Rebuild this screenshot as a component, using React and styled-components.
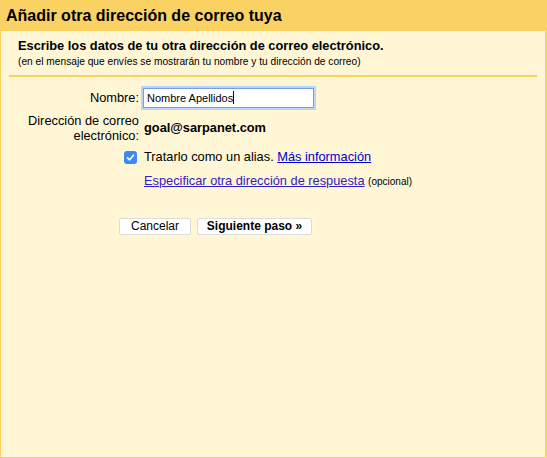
import React from "react";
import styled, { createGlobalStyle } from "styled-components";

const Global = createGlobalStyle`
  html, body { margin: 0; padding: 0; }
  body { font-family: "Liberation Sans", Arial, sans-serif; color: #000; }
`;

const Page = styled.div`
  width: 547px;
  height: 458px;
  background: #fad163;
  display: flex;
  flex-direction: column;
  box-sizing: border-box;
`;

const Header = styled.h1`
  margin: 0;
  height: 31px;
  padding-left: 6px;
  display: flex;
  align-items: center;
  font-size: 16px;
  font-weight: bold;
  letter-spacing: 0;
`;

const Body = styled.div`
  flex: 1;
  margin: 0 2px 1px 1px;
  background: #fff6d6;
  display: flex;
  flex-direction: column;
`;

const Intro = styled.div`
  padding: 7px 17px 0;
`;

const Lead = styled.div`
  font-size: 12.8px;
  font-weight: bold;
  line-height: 15px;
`;

const Note = styled.div`
  font-size: 10.2px;
  line-height: 13px;
  margin-top: 2px;
`;

const Rule = styled.div`
  height: 2px;
  background: #fad163;
  margin: 7px 8px 0;
`;

const Form = styled.div`
  display: flex;
  flex-direction: column;
  margin-top: 10px;
`;

const Row = styled.div`
  display: flex;
  align-items: center;
  margin-top: ${(p) => p.$gap || 0}px;
  min-height: ${(p) => p.$h || 16}px;
`;

const Label = styled.div`
  width: 138px;
  flex: none;
  text-align: right;
  font-size: 12.8px;
  line-height: 15px;
  display: flex;
  justify-content: flex-end;
  align-items: center;
`;

const Cell = styled.div`
  padding-left: 5px;
  font-size: 12.8px;
  line-height: 16px;
  font-weight: ${(p) => (p.$bold ? "bold" : "normal")};
`;

const Field = styled.div`
  width: 171px;
  height: 20px;
  box-sizing: border-box;
  border: 1px solid #6fa2ee;
  box-shadow: 0 0 0 2px #bcd4f5;
  background: #fff;
  font-size: 11px;
  display: flex;
  align-items: center;
  padding-left: 3px;
  margin-left: 4px;
`;

const Caret = styled.span`
  display: inline-block;
  width: 1px;
  height: 13px;
  background: #000;
`;

const Check = styled.span`
  width: 13px;
  height: 13px;
  border-radius: 3px;
  background: #3b8af2;
  display: inline-flex;
  align-items: center;
  justify-content: center;
  margin-right: 2px;
`;

const Link = styled.a`
  color: ${(p) => p.$color || "#0000cc"};
  text-decoration: underline;
  cursor: pointer;
`;

const Small = styled.span`
  font-size: 10px;
`;

const Buttons = styled.div`
  display: flex;
  gap: 6px;
  padding-left: 118px;
  margin-top: 28px;
`;

const Button = styled.button`
  height: 17px;
  box-sizing: border-box;
  padding: 0;
  width: ${(p) => p.$w}px;
  background: #fff;
  border: 1px solid #dcdcdc;
  border-radius: 2px;
  font-family: "Liberation Sans", Arial, sans-serif;
  font-size: 12px;
  font-weight: ${(p) => (p.$primary ? "bold" : "normal")};
  color: #000;
  line-height: 15px;
`;

export default function App() {
  return (
    <Page>
      <Global />
      <Header>Añadir otra dirección de correo tuya</Header>
      <Body>
        <Intro>
          <Lead>Escribe los datos de tu otra dirección de correo electrónico.</Lead>
          <Note>(en el mensaje que envíes se mostrarán tu nombre y tu dirección de correo)</Note>
        </Intro>
        <Rule />
        <Form>
          <Row $h={21}>
            <Label>Nombre:</Label>
            <Field>
              Nombre Apellidos<Caret />
            </Field>
          </Row>
          <Row $gap={5} $h={30}>
            <Label>
              Dirección de correo
              <br />
              electrónico:
            </Label>
            <Cell $bold>goal@sarpanet.com</Cell>
          </Row>
          <Row $gap={6}>
            <Label>
              <Check>
                <svg width="9" height="9" viewBox="0 0 9 9">
                  <path d="M1.5 4.8 L3.6 6.8 L7.5 2.2" fill="none" stroke="#fff" strokeWidth="1.6" strokeLinecap="round" strokeLinejoin="round" />
                </svg>
              </Check>
            </Label>
            <Cell>
              Tratarlo como un alias. <Link>Más información</Link>
            </Cell>
          </Row>
          <Row $gap={8}>
            <Label />
            <Cell>
              <Link $color="#3420c6">Especificar otra dirección de respuesta</Link>{" "}
              <Small>(opcional)</Small>
            </Cell>
          </Row>
        </Form>
        <Buttons>
          <Button $w={72}>Cancelar</Button>
          <Button $w={115} $primary>
            Siguiente paso »
          </Button>
        </Buttons>
      </Body>
    </Page>
  );
}
